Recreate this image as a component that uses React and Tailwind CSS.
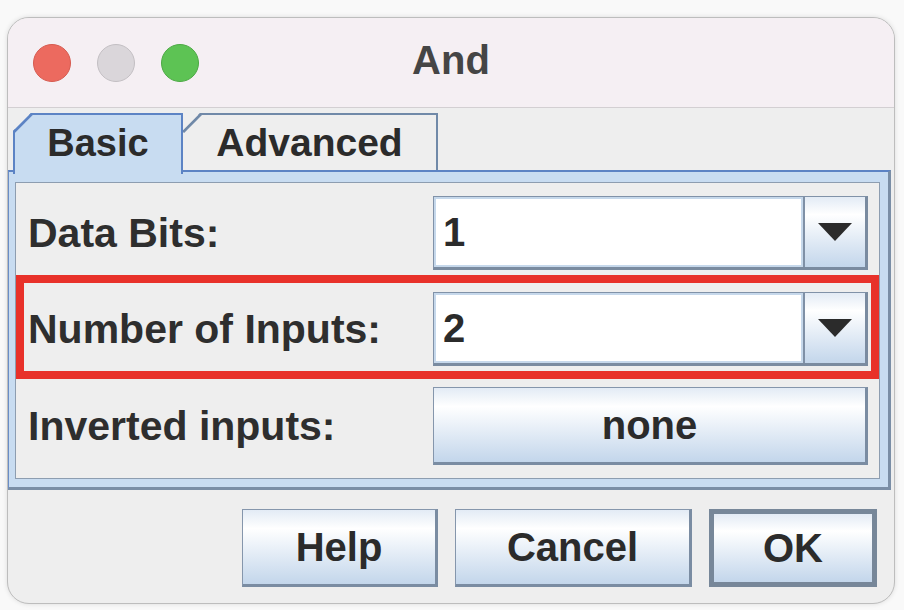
import React from "react";

const FONT = "font-['Liberation_Sans',Arial,sans-serif]";

const GRADIENT =
  "bg-linear-to-b from-[#e3ebf5] from-0% via-white via-25% to-[#c3d6eb] to-100%";

const TrafficLight = ({ color }) => (
  <div className={"h-[38px] w-[38px] rounded-full border " + color} />
);

const Arrow = () => (
  <svg width="34" height="18" viewBox="0 0 34 18">
    <path d="M0 0h34L17 18z" fill="#2b2b2b" />
  </svg>
);

const Combo = ({ value }) => {
  return (
    <div className="flex h-[74px] w-[435px] border border-[#8192a8] border-r-[3px] border-b-[3px] border-r-[#7a8ba0] border-b-[#7a8ba0] bg-white">
      <div className="flex flex-1 items-center border-2 border-[#c6d8eb] bg-white pl-[7px] text-[40px] font-bold leading-none text-[#2b2b2b]">
        {value}
      </div>
      <div className={"flex w-[62px] items-center justify-center border-l-2 border-[#7f90a6] " + GRADIENT}>
        <Arrow />
      </div>
    </div>
  );
};

const Button = ({ children, className }) => {
  return (
    <div
      className={
        "flex h-[78px] items-center justify-center text-[40px] font-bold leading-none text-[#2b2b2b] " +
        GRADIENT +
        " " +
        className
      }
    >
      {children}
    </div>
  );
};

const Row = ({ label, children, highlight }) => {
  return (
    <div className="relative flex items-center justify-between">
      <span className="text-[41px] font-bold leading-none text-[#2e2e2e]">{label}</span>
      {children}
      {highlight && (
        <div className="pointer-events-none absolute -top-[17px] -bottom-[13px] -left-[12px] -right-[11px] border-[8px] border-[#e8312a]" />
      )}
    </div>
  );
};

export default function App() {
  return (
    <div className={"h-[610px] w-[904px] bg-[#f9f9f9] pt-[17px] pl-[7px] " + FONT}>
      <div className="flex h-[587px] w-[888px] flex-col overflow-hidden rounded-[22px] border border-[#bdbdbd] bg-[#eeeeee] shadow-[0_0_5px_rgba(0,0,0,0.12)]">
        {/* title bar */}
        <div className="grid h-[90px] shrink-0 grid-cols-[1fr_auto_1fr] items-center border-b border-[#d3cfd2] bg-[#f5eff3]">
          <div className="flex items-center gap-[26px] pl-[25px]">
            <TrafficLight color="bg-[#ec6a5f] border-[#d65a4f]" />
            <TrafficLight color="bg-[#dad6da] border-[#c3bfc3]" />
            <TrafficLight color="bg-[#5dc354] border-[#4ca944]" />
          </div>
          <div className="mb-[6px] text-[40px] font-bold leading-none text-[#454545]">And</div>
          <div />
        </div>

        {/* tabs */}
        <div className="flex pt-[5px] pl-[5px]">
          <div className="relative z-10 -mb-[4px] flex h-[61px] w-[170px] items-center justify-center border-x-2 border-t-2 border-[#5c83c4] bg-[#c8dcf1] pb-[4px] text-[38px] font-bold leading-none text-[#2b2b2b] [clip-path:polygon(18px_0,100%_0,100%_100%,0_100%,0_18px)]">
            <svg className="absolute -top-[2px] -left-[2px]" width="20" height="20" viewBox="0 0 20 20">
              <path d="M0 19L19 0" stroke="#5c83c4" strokeWidth="4" />
            </svg>
            Basic
          </div>
          <div className="relative flex h-[57px] w-[255px] items-center justify-center border-t-2 border-r-2 border-[#7089a8] bg-[#eeeeee] text-[39px] font-bold leading-none text-[#2b2b2b] [clip-path:polygon(17px_0,100%_0,100%_100%,0_100%,0_17px)]">
            <svg className="absolute -top-[2px] left-0" width="20" height="20" viewBox="0 0 20 20">
              <path d="M0 19L19 0" stroke="#7089a8" strokeWidth="3" />
            </svg>
            Advanced
          </div>
        </div>

        {/* panel */}
        <div className="mr-[3px] h-[320px] shrink-0 border-t-2 border-l border-r-[3px] border-b-[3px] border-t-[#5c83c4] border-l-[#6a8dc6] border-r-[#7a8ea6] border-b-[#7a8ea6] bg-[#c8dcf1] pt-[10px] pl-[6px] pr-[8px] pb-[8px]">
          <div className="flex h-full flex-col gap-[22px] border border-[#8d9db0] bg-[#eeeeee] pt-[13px] pl-[12px] pr-[11px]">
            <Row label="Data Bits:">
              <Combo value="1" />
            </Row>
            <Row label="Number of Inputs:" highlight>
              <Combo value="2" />
            </Row>
            <Row label="Inverted inputs:">
              <Button className="-mt-[1px] w-[435px] border border-[#8596ac] border-r-[3px] border-b-[3px] border-r-[#7a8ca2] border-b-[#7a8ca2]">
                none
              </Button>
            </Row>
          </div>
        </div>

        {/* buttons */}
        <div className="flex justify-end gap-[17px] pt-[19px] pr-[17px]">
          <Button className="w-[196px] border border-[#8596ac] border-r-[3px] border-b-[3px] border-r-[#7a8ca2] border-b-[#7a8ca2]">
            Help
          </Button>
          <Button className="w-[237px] border border-[#8596ac] border-r-[3px] border-b-[3px] border-r-[#7a8ca2] border-b-[#7a8ca2]">
            Cancel
          </Button>
          <Button className="w-[168px] border-[5px] border-[#778799]">OK</Button>
        </div>
      </div>
    </div>
  );
}
